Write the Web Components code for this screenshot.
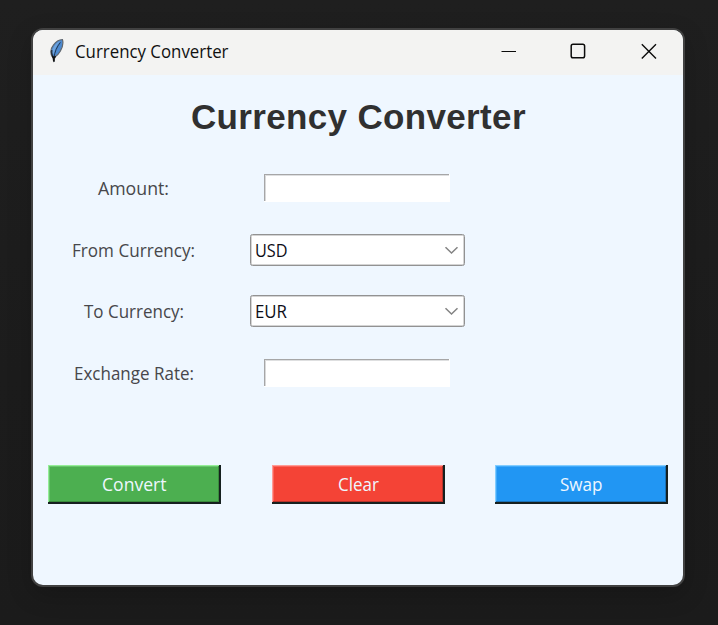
<!DOCTYPE html>
<html lang="en">
<head>
<meta charset="utf-8">
<title>Currency Converter</title>
<style>
html,body{margin:0;height:100%}
body{width:718px;height:625px;overflow:hidden;background:#1e1e1e;font-family:"Open Sans","Noto Sans",sans-serif}
</style>
</head>
<body>
<converter-app></converter-app>
<script>
const define = (name, html, after) => {
  const t = document.createElement('template');
  t.innerHTML = html;
  customElements.define(name, class extends HTMLElement {
    connectedCallback() {
      if (this.shadowRoot) return;
      this.attachShadow({mode: 'open'}).append(t.content.cloneNode(true));
      if (after) after(this, this.shadowRoot);
    }
  });
};

/* One line of text set to an exact width, with its baseline at a given height. */
define('fit-text', `
<style>:host{display:block;flex:none;line-height:0}svg{display:block;overflow:visible}text{fill:currentColor;white-space:pre}</style>
<svg><text x="0"></text></svg>`, (el, root) => {
  const svg = root.querySelector('svg'), text = root.querySelector('text');
  svg.setAttribute('width', el.getAttribute('width'));
  svg.setAttribute('height', el.getAttribute('height'));
  text.setAttribute('y', el.getAttribute('base'));
  text.setAttribute('textLength', el.getAttribute('width'));
  text.setAttribute('lengthAdjust', el.hasAttribute('spaced') ? 'spacing' : 'spacingAndGlyphs');
  text.style.fontSize = el.getAttribute('size') + 'px';
  text.textContent = el.textContent;
});

define('feather-icon', `
<style>:host{display:block;width:16px;height:26px}svg{display:block}</style>
<svg width="16" height="26" viewBox="0 0 16 26">
<path d="M4 20 C1.2 16 1.4 11 4.2 7.4 C7 3.4 10 1.6 13.4 1.5 C14.4 4.4 13.6 9 11.4 13 C9.8 16 7.4 18 5.8 19 L5 24Z" fill="#4d8ad0" stroke="#5f666e" stroke-width="1.2"/>
<path d="M3.4 15 C3 10.5 6 5.6 11 3 C8 7 5.6 11 4.9 16Z" fill="#6fa4dd"/>
<path d="M11.4 4.4 C7.8 9 5.8 13.4 4.9 20" fill="none" stroke="#1c2b40" stroke-width=".9"/>
<path d="M2.8 12 C2.4 14.5 2.8 17 3.8 19" fill="none" stroke="#20262e" stroke-width="1.2"/>
<path d="M3.4 18 L4.8 20.2 L6.6 18.2 M4.8 19 V23.6" fill="none" stroke="#111" stroke-width="1.7"/>
</svg>`);

define('title-bar', `
<style>
:host{display:flex;height:45px;background:#f3f3f2;color:#101010;align-items:center;box-sizing:border-box;padding:0 26.5px 0 16px}
.name{margin-left:10px}.controls{display:flex;margin-left:auto;gap:54px;align-items:center;padding-bottom:3px}
svg{display:block;fill:none;stroke:#0b0b0b}
feather-icon{margin-bottom:3px}
</style>
<feather-icon></feather-icon><fit-text class="name" width="153.5" height="45" base="28.2" size="17.3">Currency Converter</fit-text>
<div class="controls">
<svg width="15" height="16"><path d="M.5 8.5H15.5"/></svg>
<svg width="16" height="16" stroke-width="1.5"><rect x="1.2" y="1.3" width="13.4" height="13.4" rx="1.8"/></svg>
<svg width="17" height="16" stroke-width="1.4"><path d="M1.8 1.3L16 15.5M16 1.3L1.8 15.5"/></svg>
</div>`);

define('entry-field', `
<style>:host{display:block;width:186px;height:28px}
div{height:100%;background:linear-gradient(#a6a6a7,#a6a6a7) 0 0/185px 1px no-repeat,linear-gradient(#a6a6a7,#a6a6a7) 0 0/1px 27px no-repeat,linear-gradient(#dedfe0,#dedfe0) 0 1px/185px 1px no-repeat,linear-gradient(#d8d9da,#d8d9da) 1px 0/1px 27px no-repeat,#fff}</style>
<div></div>`);

define('combo-box', `
<style>:host{display:flex;box-sizing:border-box;width:215px;height:32px;background:#fff;border:1px solid #929292;box-shadow:inset 0 0 0 .5px #aaa;border-radius:2.5px;color:#0c0c16;justify-content:space-between;align-items:center;padding:0 5px 0 3.5px;margin-left:1px}
svg{display:block;fill:none;stroke:#838383;stroke-width:1.5}</style>
<slot></slot><svg width="15" height="10"><path d="M1.5 2.3L7.5 8L13.5 2.3"/></svg>`);

define('push-button', `
<style>:host{display:flex;box-sizing:border-box;width:173px;height:39px;background:var(--face);color:#eef7ff;justify-content:center;
box-shadow:inset -2px -2px #16201f,inset 1px 1px var(--light),inset -3px -3px var(--dark),inset 2px 2px var(--soft)}</style>
<slot></slot>`);

define('form-row', `
<style>:host{display:grid;grid-template-columns:201px 246px;height:61.5px;color:#47474b}
.cell{display:flex;justify-content:center;align-items:center}</style>
<div class="cell"><slot name="label"></slot></div><div class="cell"><slot></slot></div>`);

define('converter-app', `
<style>
:host{display:block;box-sizing:border-box;width:718px;height:625px;padding:28px 33px 0 31px;background:linear-gradient(#1f1f1f,#1c1c1c 60%,#1b1b1b)}
.window{box-sizing:border-box;width:654px;height:559px;border:2px solid #414141;border-radius:12px;overflow:hidden;background:#eff7ff;box-shadow:0 8px 24px #00000030}
.heading{display:flex;padding-left:157.5px;height:82.5px;color:#303030;font:bold 36px "Liberation Sans",Arial,sans-serif}
.buttons{display:flex;padding:61.5px 15px 0;justify-content:space-between}
</style>
<div class="window">
<title-bar></title-bar>
<div class="heading"><fit-text spaced width="334.5" height="80" base="53.7" size="35">Currency Converter</fit-text></div>
<form-row><fit-text slot="label" width="71" height="32" base="23.4" size="18">Amount:</fit-text><entry-field></entry-field></form-row>
<form-row><fit-text slot="label" width="123" height="32" base="23" size="18">From Currency:</fit-text><combo-box><fit-text width="32.5" height="30" base="21.7" size="18">USD</fit-text></combo-box></form-row>
<form-row><fit-text slot="label" width="100" height="32" base="23.4" size="18">To Currency:</fit-text><combo-box><fit-text width="32" height="30" base="21.9" size="18">EUR</fit-text></combo-box></form-row>
<form-row><fit-text slot="label" width="120" height="32" base="23" size="18">Exchange Rate:</fit-text><entry-field></entry-field></form-row>
<div class="buttons">
<push-button style="--face:#4caf50;--light:#94ee98;--soft:#69c56c;--dark:#398c3c"><fit-text width="64.5" height="39" base="25.8" size="18">Convert</fit-text></push-button>
<push-button style="--face:#f44336;--light:#ff9c96;--soft:#fb655b;--dark:#b5332b"><fit-text width="41" height="39" base="25.8" size="18">Clear</fit-text></push-button>
<push-button style="--face:#2196f3;--light:#82cdff;--soft:#42aafa;--dark:#1b72b7"><fit-text width="42.5" height="39" base="25.8" size="18">Swap</fit-text></push-button>
</div>
</div>`);
</script>
</body>
</html>
